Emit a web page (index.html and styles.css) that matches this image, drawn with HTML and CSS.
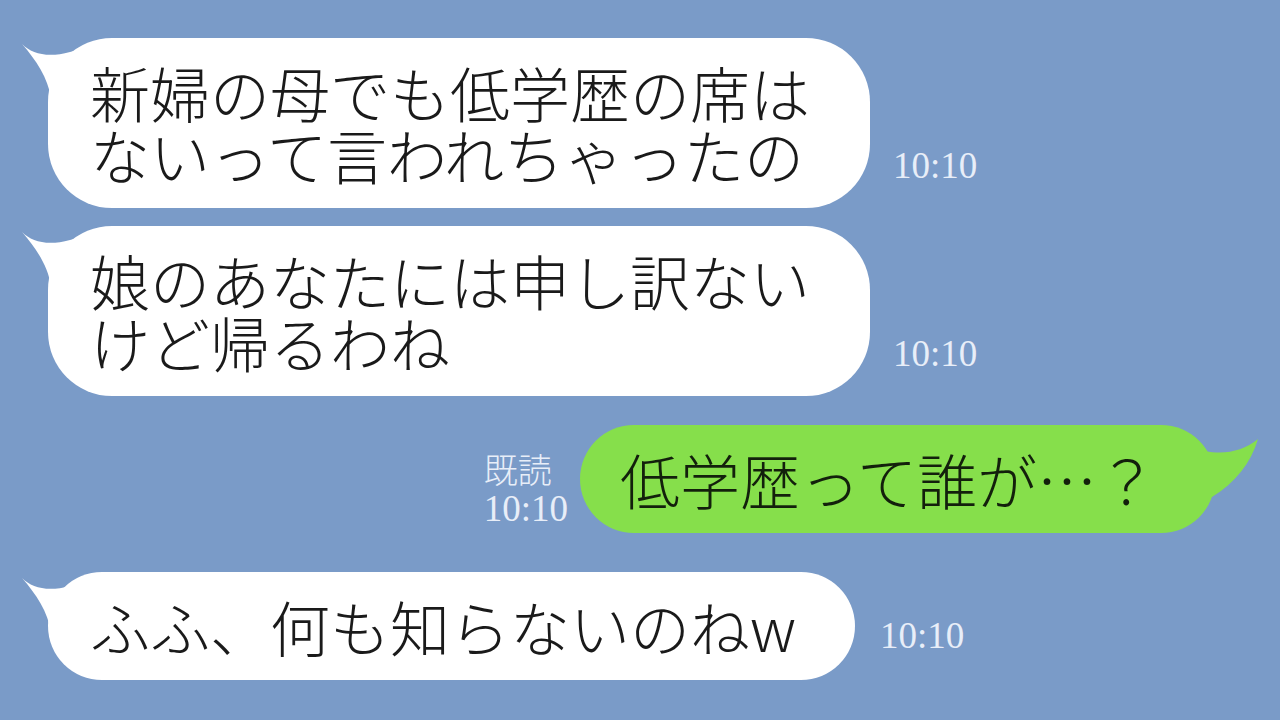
FILE: index.html
```html
<!DOCTYPE html>
<html lang="ja">
<head>
<meta charset="utf-8">
<title>chat</title>
<link rel="stylesheet" href="styles.css">
</head>
<body>
<main class="chat">
  <div class="row row-in row-1">
    <div class="bubble bubble-in two-line">
      <svg class="tail tail-in" viewBox="0 0 80 60" width="80" height="60"><path d="M4,6 C14,16 30,20 52,14 L74,8 L74,60 L33,60 C30,40 18,22 4,6 Z" fill="#fff"/></svg>
      <p class="msg"><span class="line">新婦の母でも低学歴の席は</span><span class="line">ないって言われちゃったの</span></p>
    </div>
    <span class="time time-in">10:10</span>
  </div>
  <div class="row row-in row-2">
    <div class="bubble bubble-in two-line">
      <svg class="tail tail-in" viewBox="0 0 80 60" width="80" height="60"><path d="M4,6 C14,16 30,20 52,14 L74,8 L74,60 L33,60 C30,40 18,22 4,6 Z" fill="#fff"/></svg>
      <p class="msg"><span class="line">娘のあなたには申し訳ない</span><span class="line">けど帰るわね</span></p>
    </div>
    <span class="time time-in">10:10</span>
  </div>
  <div class="row row-out row-3">
    <div class="meta">
      <span class="read">既読</span>
      <span class="time">10:10</span>
    </div>
    <div class="bubble bubble-out">
      <svg class="tail tail-out" viewBox="0 0 60 80" width="60" height="80"><path d="M0,26 C20,30 38,26 53,14 C46,38 30,58 7,72 L0,72 Z" fill="#86df4b"/></svg>
      <p class="msg msg-out">低学歴って誰が…？</p>
    </div>
  </div>
  <div class="row row-in row-4">
    <div class="bubble bubble-in one-line">
      <svg class="tail tail-in" viewBox="0 0 80 60" width="80" height="60"><path d="M4,6 C14,16 30,20 52,14 L74,8 L74,60 L33,60 C30,40 18,22 4,6 Z" fill="#fff"/></svg>
      <p class="msg">ふふ、何も知らないのねw</p>
    </div>
    <span class="time time-in">10:10</span>
  </div>
</main>
</body>
</html>
```

FILE: styles.css
```css
html, body {
  margin: 0;
  padding: 0;
}
body {
  width: 1280px;
  height: 720px;
  overflow: hidden;
  background: #7a9bc8;
  font-family: "Noto Sans CJK JP", "Noto Sans", sans-serif;
}
.chat {
  display: flex;
  flex-direction: column;
  padding-top: 38px;
}
.row {
  display: flex;
  align-items: flex-end;
}
.row-in {
  padding-left: 48px;
}
.row-out {
  justify-content: flex-end;
  padding-right: 65px;
}
.row-2 { margin-top: 18px; }
.row-3 { margin-top: 29px; }
.row-4 { margin-top: 39px; }

.bubble {
  position: relative;
  display: flex;
  align-items: center;
  box-sizing: border-box;
}
.bubble-in {
  background: #fff;
  border-radius: 64px;
}
.two-line {
  height: 170px;
  width: 822px;
  padding-left: 42px;
}
.one-line {
  height: 108px;
  width: 807px;
  padding-left: 42px;
  border-radius: 54px;
}
.bubble-out {
  background: #86df4b;
  height: 108px;
  width: 635px;
  border-radius: 54px;
  padding-left: 40px;
}
.tail {
  position: absolute;
  display: block;
}
.tail-in {
  left: -30px;
  top: 0;
}
.tail-out {
  right: -50px;
  top: 0;
}
.msg {
  margin: 0;
  position: relative;
  display: flex;
  flex-direction: column;
  font-size: 60px;
  line-height: 62px;
  color: #1a1a1a;
  white-space: nowrap;
  font-weight: 300;
}
.line {
  display: block;
  height: 62px;
}
.msg-out {
  color: #13200c;
}
.time {
  font-family: "Liberation Serif", "Times New Roman", serif;
  font-size: 37px;
  line-height: 1;
  color: #e8eef8;
}
.time-in {
  margin-left: 23px;
  margin-bottom: 24px;
}
.row-4 .time-in {
  margin-left: 25px;
  margin-bottom: 26px;
}
.meta {
  display: flex;
  flex-direction: column;
  align-items: flex-start;
  margin-right: 12px;
  margin-bottom: 6px;
}
.read {
  font-size: 34px;
  line-height: 42px;
  color: #e8eef8;
  font-weight: 300;
}
```
